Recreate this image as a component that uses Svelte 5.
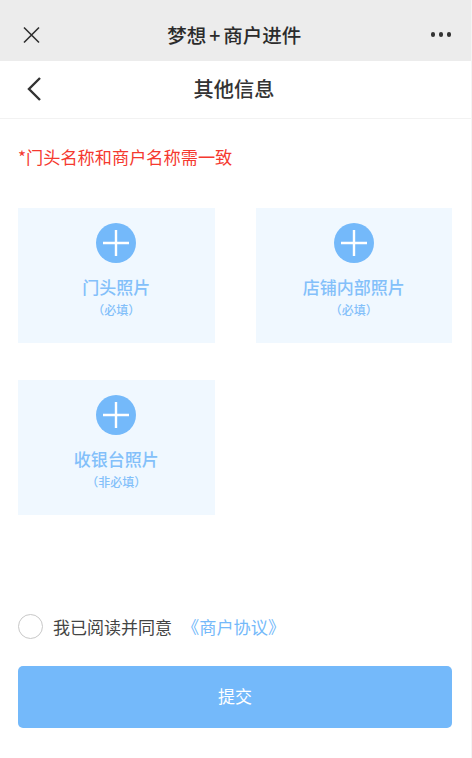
<script>
    const cards = [
        { title: "门头照片", note: "（必填）" },
        { title: "店铺内部照片", note: "（必填）" },
        { title: "收银台照片", note: "（非必填）" }
    ];
</script>

<div class="page">
    <header class="wechat-bar">
        <svg class="close" width="20" height="20" viewBox="0 0 20 20">
            <path d="M3 2.5 L18 17.5 M18 2.5 L3 17.5" stroke="#2e2e2e" stroke-width="1.6" fill="none" />
        </svg>
        <span class="wechat-title">梦想<span class="add">+</span>商户进件</span>
        <div class="dots"><i></i><i></i><i></i></div>
    </header>

    <nav class="nav">
        <svg class="back" width="16" height="26" viewBox="0 0 16 26">
            <path d="M14 2 L3 13 L14 24" stroke="#333" stroke-width="2.4" fill="none" />
        </svg>
        <h1>其他信息</h1>
    </nav>

    <main class="content">
        <p class="hint">*门头名称和商户名称需一致</p>

        <div class="grid">
            {#each cards as card}
                <div class="card">
                    <div class="plus">
                        <svg width="40" height="40" viewBox="0 0 40 40">
                            <path d="M7 20 H33 M20 7 V33" stroke="#fff" stroke-width="2.4" fill="none" />
                        </svg>
                    </div>
                    <div class="card-title">{card.title}</div>
                    <div class="card-note">{card.note}</div>
                </div>
            {/each}
        </div>

        <div class="agree">
            <span class="radio"></span>
            <span class="agree-text">我已阅读并同意</span>
            <span class="agree-link">《商户协议》</span>
        </div>

        <button class="submit">提交</button>
    </main>
</div>

<style>
    :global(body) {
        margin: 0;
        background: #fff;
    }

    .page {
        width: 472px;
        height: 758px;
        box-sizing: border-box;
        border-right: 1px solid #f4f4f4;
        overflow: hidden;
        font-family: "Noto Sans CJK SC", "Liberation Sans", sans-serif;
        display: flex;
        flex-direction: column;
    }

    .wechat-bar {
        height: 61px;
        flex: none;
        background: #ececec;
        display: flex;
        align-items: center;
        justify-content: space-between;
        padding: 8px 20px 0 21px;
        box-sizing: border-box;
    }

    .wechat-title {
        font-size: 19.5px;
        font-weight: 500;
        color: #2b2b2b;
        margin-right: 3px;
    }

    .add {
        margin: 0 3px;
    }

    .dots {
        display: flex;
        gap: 3.5px;
    }

    .dots i {
        width: 4.5px;
        height: 4.5px;
        border-radius: 50%;
        background: #333;
    }

    .nav {
        height: 57px;
        flex: none;
        display: flex;
        align-items: center;
        justify-content: center;
        position: relative;
        border-bottom: 1px solid #f2f2f2;
    }

    .back {
        position: absolute;
        left: 26px;
        top: 15px;
    }

    .nav h1 {
        margin: 0 3px 3px 0;
        font-size: 20.2px;
        font-weight: 500;
        color: #333;
    }

    .content {
        padding: 0 19px 0 18px;
        flex: 1;
    }

    .hint {
        margin: 25px 0 0;
        font-size: 17.2px;
        line-height: 26px;
        color: #f5392f;
    }

    .grid {
        margin-top: 38px;
        display: grid;
        grid-template-columns: 196.5px 196.5px;
        column-gap: 41px;
        row-gap: 37px;
    }

    .card {
        height: 135px;
        background: #f0f8ff;
        display: flex;
        flex-direction: column;
        align-items: center;
        padding-top: 15px;
        box-sizing: border-box;
    }

    .plus {
        width: 40px;
        height: 40px;
        border-radius: 50%;
        background: #74b9fa;
    }

    .plus svg {
        display: block;
    }

    .card-title {
        margin-top: 11px;
        font-size: 17px;
        line-height: 26px;
        font-weight: 500;
        color: #83c0fa;
    }

    .card-note {
        margin-top: 2px;
        font-size: 12px;
        line-height: 16px;
        font-weight: 500;
        color: #83c0fa;
    }

    .agree {
        margin-top: 98px;
        display: flex;
        align-items: center;
        height: 26px;
    }

    .radio {
        width: 23px;
        height: 23px;
        border: 1.2px solid #c8c8c8;
        border-radius: 50%;
        flex: none;
    }

    .agree-text {
        margin-left: 10px;
        font-size: 17px;
        color: #444;
    }

    .agree-link {
        margin-left: 10px;
        font-size: 17.2px;
        color: #74b9fa;
    }

    .submit {
        display: block;
        margin-top: 27px;
        width: 434px;
        height: 62px;
        border: none;
        border-radius: 5px;
        background: #74b9fa;
        color: #fff;
        font-family: inherit;
        font-size: 17px;
        padding: 0 0 4px;
    }
</style>
